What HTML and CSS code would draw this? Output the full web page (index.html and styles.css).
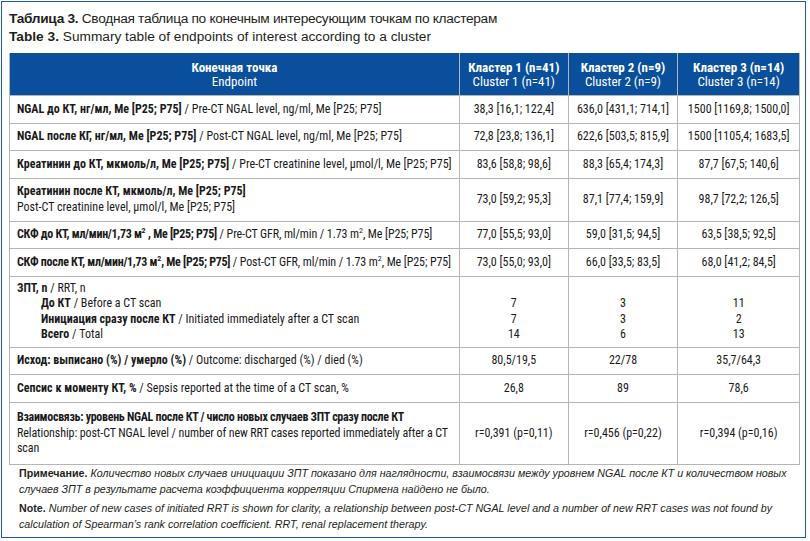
FILE: index.html
```html
<!DOCTYPE html>
<html lang="ru">
<head>
    <meta charset="UTF-8">
    <title>Таблица 3</title>
    <link rel="stylesheet" href="styles.css">
</head>
<body>
    <div class="frame">
        <div class="caption">
            <div class="ru"><b>Таблица 3.</b> Сводная таблица по конечным интересующим точкам по кластерам</div>
            <div><b>Table 3.</b> Summary table of endpoints of interest according to a cluster</div>
        </div>

        <table class="data">
            <colgroup>
                <col class="c-name">
                <col class="c1">
                <col class="c2">
                <col class="c3">
            </colgroup>
            <thead>
                <tr>
                    <th><b>Конечная точка</b><br>Endpoint</th>
                    <th><b>Кластер 1 (n=41)</b><br>Cluster 1 (n=41)</th>
                    <th><b>Кластер 2 (n=9)</b><br>Cluster 2 (n=9)</th>
                    <th><b>Кластер 3 (n=14)</b><br>Cluster 3 (n=14)</th>
                </tr>
            </thead>
            <tbody>
                <tr>
                    <td class="name"><b>NGAL до КТ, нг/мл, Me [P25; P75]</b> / Pre-CT NGAL level, ng/ml, Me [P25; P75]</td>
                    <td>38,3 [16,1; 122,4]</td>
                    <td>636,0 [431,1; 714,1]</td>
                    <td>1500 [1169,8; 1500,0]</td>
                </tr>
                <tr>
                    <td class="name"><b>NGAL после КГ, нг/мл, Me [P25; P75]</b> / Post-CT NGAL level, ng/ml, Me [P25; P75]</td>
                    <td>72,8 [23,8; 136,1]</td>
                    <td>622,6 [503,5; 815,9]</td>
                    <td>1500 [1105,4; 1683,5]</td>
                </tr>
                <tr>
                    <td class="name"><b>Креатинин до КТ, мкмоль/л, Me [P25; P75]</b> / Pre-CT creatinine level, μmol/l, Me [P25; P75]</td>
                    <td>83,6 [58,8; 98,6]</td>
                    <td>88,3 [65,4; 174,3]</td>
                    <td>87,7 [67,5; 140,6]</td>
                </tr>
                <tr>
                    <td class="name"><b>Креатинин после КТ, мкмоль/л, Me [P25; P75]</b><br>Post-CT creatinine level, μmol/l, Me [P25; P75]</td>
                    <td>73,0 [59,2; 95,3]</td>
                    <td>87,1 [77,4; 159,9]</td>
                    <td>98,7 [72,2; 126,5]</td>
                </tr>
                <tr>
                    <td class="name nw"><b>СКФ до КТ, мл/мин/1,73 м<sup>2</sup> , Me [P25; P75]</b> / Pre-CT GFR, ml/min / 1.73 m<sup>2</sup>, Me [P25; P75]</td>
                    <td>77,0 [55,5; 93,0]</td>
                    <td>59,0 [31,5; 94,5]</td>
                    <td>63,5 [38,5; 92,5]</td>
                </tr>
                <tr>
                    <td class="name nw"><b>СКФ после КТ, мл/мин/1,73 м<sup>2</sup>, Me [P25; P75]</b> / Post-CT GFR, ml/min / 1.73 m<sup>2</sup>, Me [P25; P75]</td>
                    <td>73,0 [55,0; 93,0]</td>
                    <td>66,0 [33,5; 83,5]</td>
                    <td>68,0 [41,2; 84,5]</td>
                </tr>
                <tr class="rrt">
                    <td class="name">
                        <b>ЗПТ, n</b> / RRT, n
                        <div class="sub"><b>До КТ</b> / Before a CT scan</div>
                        <div class="sub"><b>Инициация сразу после КТ</b> / Initiated immediately after a CT scan</div>
                        <div class="sub"><b>Всего</b> / Total</div>
                    </td>
                    <td class="bottom">7<br>7<br>14</td>
                    <td class="bottom">3<br>3<br>6</td>
                    <td class="bottom">11<br>2<br>13</td>
                </tr>
                <tr>
                    <td class="name"><b>Исход: выписано (%) / умерло (%)</b> / Outcome: discharged (%) / died (%)</td>
                    <td>80,5/19,5</td>
                    <td>22/78</td>
                    <td>35,7/64,3</td>
                </tr>
                <tr>
                    <td class="name"><b>Сепсис к моменту КТ, %</b> / Sepsis reported at the time of a CT scan, %</td>
                    <td>26,8</td>
                    <td>89</td>
                    <td>78,6</td>
                </tr>
                <tr class="tall">
                    <td class="name nw"><b>Взаимосвязь: уровень NGAL после КТ / число новых случаев ЗПТ сразу после КТ</b><br>Relationship: post-CT NGAL level / number of new RRT cases reported immediately after a CT<br>scan</td>
                    <td>r=0,391 (p=0,11)</td>
                    <td>r=0,456 (p=0,22)</td>
                    <td>r=0,394 (p=0,16)</td>
                </tr>
            </tbody>
        </table>

        <div class="notes">
            <p><b>Примечание.</b> <i>Количество новых случаев инициации ЗПТ показано для наглядности, взаимосвязи между уровнем NGAL после КТ и количеством новых<br>случаев ЗПТ в результате расчета коэффициента корреляции Спирмена найдено не было.</i></p>
            <p><b>Note.</b> <i>Number of new cases of initiated RRT is shown for clarity, a relationship between post-CT NGAL level and a number of new RRT cases was not found by<br>calculation of Spearman’s rank correlation coefficient. RRT, renal replacement therapy.</i></p>
        </div>
    </div>
</body>
</html>
```

FILE: styles.css
```css
body {
    margin: 0;
    padding: 0;
    background: #fff;
    color: #222;
    font-family: "Liberation Sans", Arial, sans-serif;
}
.frame {
    box-sizing: border-box;
    width: 805px;
    height: 537px;
    margin: 1px 0 0 1px;
    border: 1px solid #1c5aa6;
    padding: 8px 4px 0 7px;
}
.caption {
    font-size: 13.7px;
    line-height: 18px;
    color: #231f20;
}
.caption .ru {
    letter-spacing: -0.3px;
}
.data {
    width: 791px;
    margin-top: 7px;
    border-collapse: collapse;
    font-family: Roboto, "DejaVu Sans Condensed", sans-serif;
    font-stretch: condensed;
    font-size: 12px;
    line-height: 15.5px;
    color: #1a1a1a;
}
.c-name { width: 450px; }
.c1 { width: 109px; }
.c2 { width: 110px; }
.c3 { width: 122px; }
.data th {
    background-color: #0a4f9c;
    color: #fff;
    font-weight: normal;
    font-size: 13px;
    line-height: 14px;
    padding: 8px 4px 6px;
    border: 1px solid #b5b5b5;
    border-top: none;
}
.data th b {
    font-weight: 700;
}
.data td {
    border: 1px solid #b5b5b5;
    padding: 5.5px 4px;
    text-align: center;
    vertical-align: middle;
}
.data td.name {
    text-align: left;
    padding-left: 7px;
    padding-right: 2px;
}
.data td.nw {
    white-space: nowrap;
    letter-spacing: -0.1px;
}
.data td.nw b {
    letter-spacing: -0.3px;
}
.data tr.rrt td {
    padding-top: 4px;
    padding-bottom: 4px;
}
.data tr.tall td {
    padding-top: 7.5px;
    padding-bottom: 7.5px;
}
.data td.bottom {
    vertical-align: bottom;
}
.sub {
    padding-left: 24px;
}
sup {
    font-size: 8px;
    line-height: 0;
    letter-spacing: 0;
}
.notes {
    padding: 0 0 0 10px;
    font-size: 10.7px;
    line-height: 16px;
    color: #231f20;
    white-space: nowrap;
}
.notes p {
    margin: 0 0 3px 0;
}
```
